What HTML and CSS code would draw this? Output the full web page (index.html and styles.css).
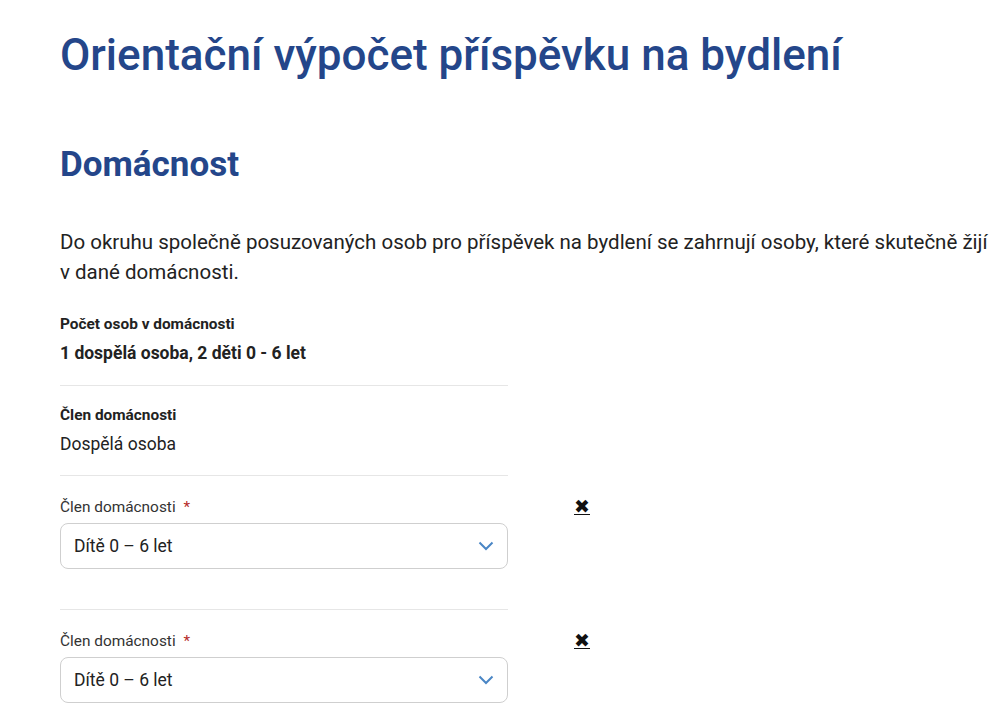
FILE: index.html
```html
<!DOCTYPE html>
<html lang="cs">
<head>
  <meta charset="utf-8">
  <title>Orientační výpočet příspěvku na bydlení</title>
  <link rel="stylesheet" href="styles.css">
</head>
<body>
  <main class="page">
    <h1 class="page-title">Orientační výpočet příspěvku na bydlení</h1>

    <section class="household">
      <h2 class="section-title">Domácnost</h2>
      <p class="intro">Do okruhu společně posuzovaných osob pro příspěvek na bydlení se zahrnují osoby, které skutečně žijí v dané domácnosti.</p>

      <div class="item first">
        <div class="item-label">Počet osob v domácnosti</div>
        <div class="item-value strong">1 dospělá osoba, 2 děti 0 - 6 let</div>
      </div>

      <div class="item">
        <div class="item-label">Člen domácnosti</div>
        <div class="item-value">Dospělá osoba</div>
      </div>

      <div class="item member">
        <div class="member-field">
          <label class="field-label" for="member-1">Člen domácnosti <span class="req">*</span></label>
          <div class="select-wrap">
            <select id="member-1" class="select">
              <option>Dítě 0 – 6 let</option>
              <option>Dospělá osoba</option>
            </select>
            <svg class="chevron" width="16" height="10" viewBox="0 0 16 10"><path d="M1.5 1.5 L8 8 L14.5 1.5" fill="none" stroke="currentColor" stroke-width="2"/></svg>
          </div>
        </div>
        <a href="#" class="remove">✖</a>
      </div>

      <div class="item member">
        <div class="member-field">
          <label class="field-label" for="member-2">Člen domácnosti <span class="req">*</span></label>
          <div class="select-wrap">
            <select id="member-2" class="select">
              <option>Dítě 0 – 6 let</option>
              <option>Dospělá osoba</option>
            </select>
            <svg class="chevron" width="16" height="10" viewBox="0 0 16 10"><path d="M1.5 1.5 L8 8 L14.5 1.5" fill="none" stroke="currentColor" stroke-width="2"/></svg>
          </div>
        </div>
        <a href="#" class="remove">✖</a>
      </div>
    </section>
  </main>
</body>
</html>
```

FILE: styles.css
```css
body {
  margin: 0;
  font-family: Roboto, "Noto Sans", Arial, sans-serif;
  color: #222;
  background-color: #fff;
}

.page {
  padding: 0 0 0 60px;
}

.page-title {
  margin: 0;
  padding-top: 27px;
  font-size: 44px;
  line-height: 56px;
  font-weight: 500;
  color: #24468a;
}

.section-title {
  margin: 60px 0 0;
  font-size: 35px;
  line-height: 44px;
  font-weight: 700;
  color: #24468a;
}

.intro {
  margin: 40px 0 0;
  font-size: 20.5px;
  line-height: 30px;
  max-width: 940px;
}

.item {
  width: 448px;
  padding: 19px 0 19px;
  border-bottom: 1px solid #e6e6e6;
}

.item.first {
  padding: 27px 0 20px;
}

.item:last-child {
  border-bottom: none;
}

.item-label {
  font-size: 15.4px;
  line-height: 20px;
  font-weight: 700;
}

.item-value {
  margin-top: 7px;
  font-size: 17.5px;
  line-height: 24px;
}

.item-value.strong {
  font-weight: 700;
}

.member {
  display: flex;
  align-items: flex-start;
  padding: 21px 0 40px;
}

.member-field {
  flex: 0 0 448px;
}

.field-label {
  display: block;
  font-size: 15.4px;
  line-height: 20px;
  color: #333;
}

.req {
  margin-left: 4px;
  color: #b52a2a;
}

.select-wrap {
  position: relative;
  margin-top: 6px;
}

.select {
  display: block;
  width: 100%;
  height: 46px;
  padding: 0 40px 0 13px;
  font-family: inherit;
  font-size: 17.5px;
  color: #222;
  background: #fff;
  border: 1px solid #cfcfcf;
  border-radius: 8px;
  box-sizing: border-box;
  appearance: none;
  -webkit-appearance: none;
}

.chevron {
  position: absolute;
  right: 14px;
  top: 18px;
  color: #4a86c5;
  pointer-events: none;
}

.remove {
  margin: 0 0 0 66px;
  font-size: 19px;
  line-height: 20px;
  color: #111;
  text-decoration: underline;
}
```
